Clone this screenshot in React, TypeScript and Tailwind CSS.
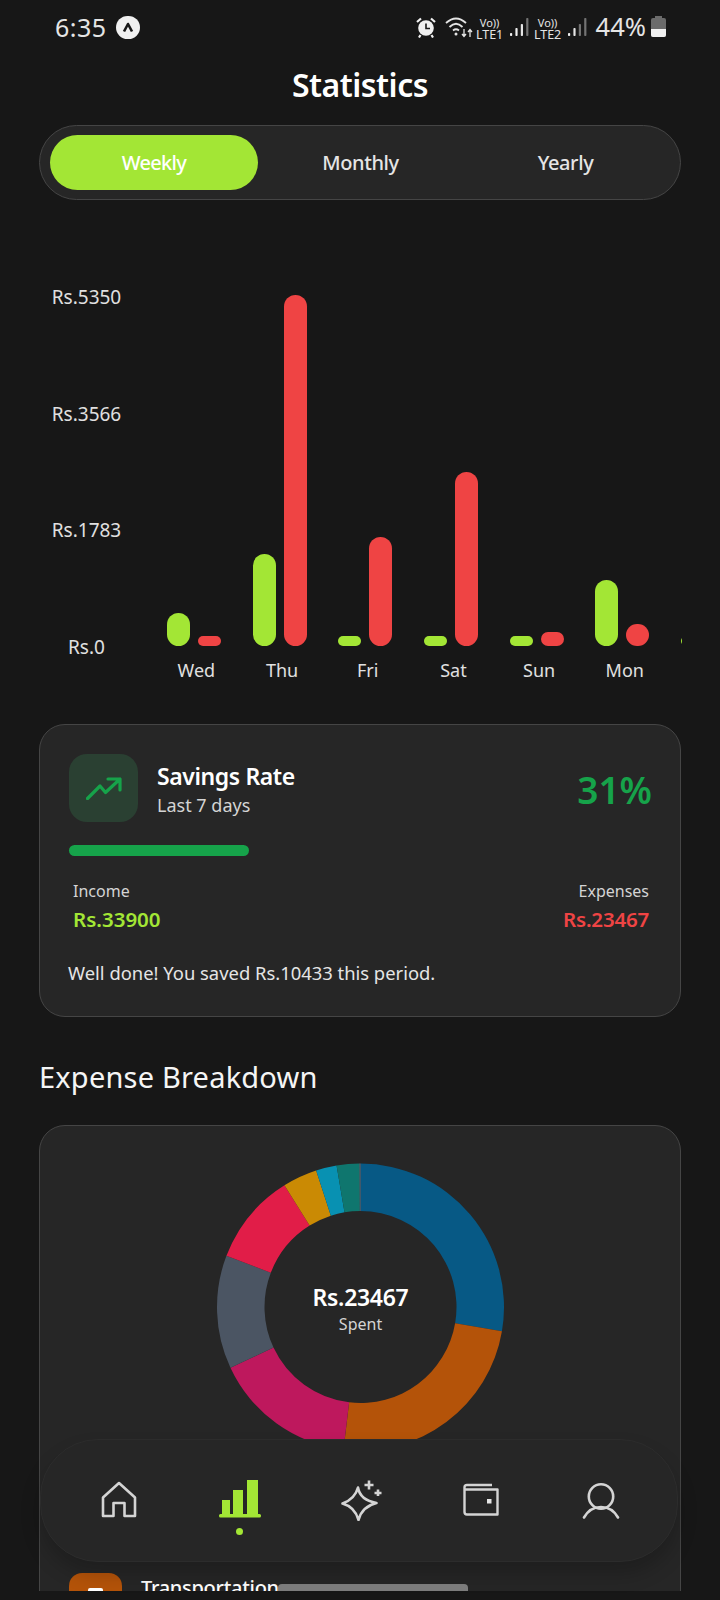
import type { ReactNode } from "react";

const days = [
  { name: "Wed", green: 33, red: 10 },
  { name: "Thu", green: 92, red: 351 },
  { name: "Fri", green: 10, red: 109 },
  { name: "Sat", green: 10, red: 174 },
  { name: "Sun", green: 10, red: 14 },
  { name: "Mon", green: 66, red: 22 },
  { name: "", green: 10, red: 10 },
];

const slices = [
  { from: 0, to: 99.7, color: "#075985" },
  { from: 99.7, to: 186.8, color: "#b45309" },
  { from: 186.8, to: 245, color: "#be185d" },
  { from: 245, to: 290.9, color: "#4b5563" },
  { from: 290.9, to: 328, color: "#e11d48" },
  { from: 328, to: 342, color: "#ca8a04" },
  { from: 342, to: 350.4, color: "#0891b2" },
  { from: 350.4, to: 359.6, color: "#0f766e" },
  { from: 359.6, to: 360, color: "#6b7280" },
];

function arcPath(from: number, to: number) {
  const cx = 144.5;
  const cy = 144;
  const R = 143.5;
  const r = 96;
  const pt = (rad: number, deg: number) => {
    const a = (deg * Math.PI) / 180;
    return `${(cx + rad * Math.sin(a)).toFixed(2)} ${(cy - rad * Math.cos(a)).toFixed(2)}`;
  };
  const large = to - from > 180 ? 1 : 0;
  return `M${pt(R, from)} A${R} ${R} 0 ${large} 1 ${pt(R, to)} L${pt(r, to)} A${r} ${r} 0 ${large} 0 ${pt(r, from)} Z`;
}

function Signal({ levels }: { levels: string[] }) {
  const heights = [3, 8, 12, 18];
  return (
    <svg width="19" height="20" viewBox="0 0 19 20" className="shrink-0">
      {heights.map((h, i) => (
        <rect key={i} x={i * 5.4} y={19 - h} width="2.2" height={h} rx="0.8" fill={levels[i]} />
      ))}
    </svg>
  );
}

function Lte({ label }: { label: string }) {
  return (
    <div className="flex w-[28px] shrink-0 flex-col items-center text-[12.5px] leading-[12px] text-[#e5e5e5]">
      <span className="text-[11px]">Vo))</span>
      <span>{label}</span>
    </div>
  );
}

function StatusBar() {
  return (
    <div className="flex h-[54px] items-center pl-[55px] text-[#e5e5e5]">
      <span className="text-[25px] leading-none tracking-[0.5px]">6:35</span>
      <div className="ml-[9px] flex h-[23px] w-[24px] items-center justify-center rounded-full bg-[#f0f0f0]">
        <svg width="12" height="11" viewBox="0 0 12 11">
          <path d="M2 9.5 L6 2 L10 9.5" fill="none" stroke="#171717" strokeWidth="2.6" strokeLinejoin="round" />
        </svg>
      </div>
      <svg width="20" height="21" viewBox="0 0 20 21" className="ml-[276px] shrink-0">
        <circle cx="10" cy="11" r="7.8" fill="#f0f0f0" />
        <path d="M10 6.5 V11.5 H14" fill="none" stroke="#171717" strokeWidth="1.6" />
        <path d="M1 5 L5 1.5 M19 5 L15 1.5 M4.5 18 L3 20.5 M15.5 18 L17 20.5" stroke="#f0f0f0" strokeWidth="2.2" />
      </svg>
      <svg width="28" height="22" viewBox="0 0 28 22" className="ml-[9px] shrink-0">
        <path d="M1 7 Q11 -2 21 7 M4.5 11 Q11 4.5 17.5 11 M8 14.5 Q11 12 14 14.5" fill="none" stroke="#e5e5e5" strokeWidth="1.8" />
        <circle cx="11" cy="18" r="1.5" fill="#e5e5e5" />
        <path d="M19 13 V20 M17 18 L19 20.5 L21 18 M25 21 V14 M23 16 L25 13.5 L27 16" fill="none" stroke="#e5e5e5" strokeWidth="1.3" />
      </svg>
      <div className="ml-[3px] mt-[3px]">
        <Lte label="LTE1" />
      </div>
      <div className="ml-[6px]">
        <Signal levels={["#f0f0f0", "#f0f0f0", "#e5e5e5", "#737373"]} />
      </div>
      <div className="ml-[5px] mt-[3px]">
        <Lte label="LTE2" />
      </div>
      <div className="ml-[6px]">
        <Signal levels={["#f0f0f0", "#e5e5e5", "#737373", "#737373"]} />
      </div>
      <span className="ml-[9px] text-[25.5px] leading-none">44%</span>
      <div className="ml-[5px] flex h-[19px] w-[15px] flex-col rounded-[2px] bg-[#6b6b6b]">
        <div className="mx-auto -mt-[2px] h-[2px] w-[7px] bg-[#6b6b6b]" />
        <div className="mt-auto h-[8px] rounded-b-[2px] bg-[#f0f0f0]" />
      </div>
    </div>
  );
}

function Tabs() {
  return (
    <div className="mx-[39px] mt-[9px] flex h-[75px] items-center rounded-full border border-[#454545] bg-[#262626] px-[10px] text-[20px] font-medium tracking-[-0.4px] text-[#e5e5e5]">
      <div className="flex h-[55px] w-[208px] items-center justify-center rounded-full bg-[#a3e635] tracking-[-0.7px] text-white">
        Weekly
      </div>
      <div className="flex w-[205px] items-center justify-center">Monthly</div>
      <div className="flex w-[205px] items-center justify-center">Yearly</div>
    </div>
  );
}

function Chart() {
  return (
    <div className="mt-[85px] flex pl-[40px]">
      <div className="flex h-[374px] w-[93px] shrink-0 flex-col justify-between text-center text-[19px] leading-[24px] text-[#e0e0e0]">
        <span>Rs.5350</span>
        <span>Rs.3566</span>
        <span>Rs.1783</span>
        <span>Rs.0</span>
      </div>
      <div className="ml-[18px] flex w-[531px] overflow-hidden">
        {days.map((d) => (
          <div key={d.green + d.name + d.red} className="w-[85.7px] shrink-0">
            <div className="flex h-[361px] items-end justify-center gap-[8px]">
              <div className="w-[23px] rounded-full bg-[#a3e635]" style={{ height: d.green }} />
              <div className="w-[23px] rounded-full bg-[#ef4444]" style={{ height: d.red }} />
            </div>
            <div className="mt-[12px] h-[24px] pl-[5px] text-center text-[18px] leading-[24px] text-[#e0e0e0]">{d.name}</div>
          </div>
        ))}
      </div>
    </div>
  );
}

function SavingsCard() {
  return (
    <div className="mx-[39px] mt-[42px] h-[293px] rounded-[26px] border border-[#454545] bg-[#262626] pl-[29px] pr-[28px] pt-[29px]">
      <div className="flex items-start">
        <div className="flex h-[68px] w-[69px] items-center justify-center rounded-[18px] bg-[#2a4032]">
          <svg width="36" height="23" viewBox="0 0 36 23">
            <path d="M1.5 21.5 L14 9 L19.5 15.5 L34 2 M22 2 H34 V13" fill="none" stroke="#16a34a" strokeWidth="3.2" strokeLinecap="round" strokeLinejoin="round" />
          </svg>
        </div>
        <div className="ml-[19px] pt-[5px]">
          <div className="text-[23px] font-semibold leading-[34px] tracking-[-0.4px] text-white">Savings Rate</div>
          <div className="mt-[-1px] text-[18px] leading-[26px] text-[#d4d4d4]">Last 7 days</div>
        </div>
        <div className="ml-auto pt-[11px] text-[37px] font-semibold leading-[50px] text-[#16a34a]">31%</div>
      </div>
      <div className="mt-[23px] h-[11px] w-[180px] rounded-full bg-[#16a34a]" />
      <div className="mt-[23px] flex justify-between pl-[4px] pr-[3px]">
        <div>
          <div className="text-[16px] leading-[24px] text-[#d4d4d4]">Income</div>
          <div className="mt-[2px] text-[20.5px] font-semibold leading-[28px] text-[#a3e635]">Rs.33900</div>
        </div>
        <div className="text-right">
          <div className="text-[16px] leading-[24px] text-[#d4d4d4]">Expenses</div>
          <div className="mt-[2px] text-[20.5px] font-semibold leading-[28px] tracking-[-0.2px] text-[#ef4444]">Rs.23467</div>
        </div>
      </div>
      <div className="-ml-[1px] mt-[27px] text-[18.4px] leading-[26px] text-[#e5e5e5]">Well done! You saved Rs.10433 this period.</div>
    </div>
  );
}

function BreakdownCard() {
  return (
    <div className="mx-[39px] mt-[28px] h-[600px] rounded-[26px] border border-[#454545] bg-[#262626] px-[29px] pt-[37px]">
      <div className="relative mx-auto h-[288px] w-[288px]">
        <svg width="288" height="288" viewBox="0 0 288 288">
          {slices.map((s) => (
            <path key={s.color} d={arcPath(s.from, s.to)} fill={s.color} />
          ))}
        </svg>
        <div className="absolute inset-0 flex flex-col items-center pl-[1px] pt-[118px]">
          <div className="text-[23px] font-semibold leading-[32px] tracking-[-0.3px] text-white">Rs.23467</div>
          <div className="text-[16px] leading-[22px] text-[#d4d4d4]">Spent</div>
        </div>
      </div>
      <div className="mt-[122px] flex">
        <div className="flex h-[52px] w-[53px] shrink-0 justify-center rounded-[13px] bg-[#b45309] pt-[15px]">
          <div className="h-[14px] w-[15px] rounded-[2px] bg-white" />
        </div>
        <div className="ml-[19px] pt-[1px] text-[20px] font-medium leading-[28px] tracking-[-0.3px] text-white">Transportation</div>
      </div>
    </div>
  );
}

function NavCell({ children }: { children: ReactNode }) {
  return <div className="flex w-[120.5px] shrink-0 flex-col items-center">{children}</div>;
}

function BottomNav() {
  return (
    <div className="absolute left-[40px] top-[1439px] flex h-[123px] w-[638px] rounded-[58px] border border-[#2c2c2c] bg-[#262626] pl-[18px] pt-[40px] shadow-[0_12px_20px_rgba(0,0,0,0.2)]">
      <NavCell>
        <svg width="36" height="37" viewBox="0 0 36 37" className="mt-[1px]">
          <path d="M2 16.5 L18 2 L34 16.5 V35 H23.5 V22 H12.5 V35 H2 Z" fill="none" stroke="#d4d4d4" strokeWidth="2.6" strokeLinejoin="round" />
        </svg>
      </NavCell>
      <NavCell>
        <svg width="42" height="38" viewBox="0 0 42 38">
          <rect x="3" y="20" width="8" height="15" fill="#a3e635" />
          <rect x="14" y="10" width="10" height="25" fill="#a3e635" />
          <rect x="28" y="0" width="11" height="35" fill="#a3e635" />
          <rect x="0" y="34" width="42" height="3.5" rx="1.5" fill="#a3e635" />
        </svg>
        <div className="mt-[10px] h-[7px] w-[7px] rounded-full bg-[#a3e635]" />
      </NavCell>
      <NavCell>
        <svg width="42" height="42" viewBox="0 0 42 42" className="-mt-[1px] ml-[3px]">
          <path d="M17 8.5 Q19 21 35.5 24 Q21 27.5 17.5 41 Q14 28 1.5 24.5 Q14 20 17 8.5 Z" fill="none" stroke="#d4d4d4" strokeWidth="2.6" strokeLinejoin="round" />
          <path d="M28 1.5 V10.5 M23.5 6 H32.5 M37 10.5 V17 M33.5 14 H40.5" fill="none" stroke="#d4d4d4" strokeWidth="2.6" />
        </svg>
      </NavCell>
      <NavCell>
        <svg width="36" height="33" viewBox="0 0 36 33" className="mt-[3px]">
          <path d="M29 2 H4 Q1.5 2 1.5 4.5 V29 Q1.5 31.5 4 31.5 H34.5 V6.5 H1.5" fill="none" stroke="#d4d4d4" strokeWidth="2.4" strokeLinejoin="round" />
          <rect x="24" y="16" width="4.5" height="4.5" fill="#e5e5e5" />
        </svg>
      </NavCell>
      <NavCell>
        <svg width="38" height="36" viewBox="0 0 38 36" className="mt-[3px]">
          <circle cx="19" cy="13.5" r="12.2" fill="none" stroke="#d4d4d4" strokeWidth="2.6" />
          <path d="M2 34.5 Q8 24 19 24 Q30 24 36 34.5" fill="none" stroke="#d4d4d4" strokeWidth="2.6" strokeLinecap="round" />
        </svg>
      </NavCell>
    </div>
  );
}

export default function App() {
  return (
    <div className="relative h-[1600px] w-[720px] overflow-hidden bg-[#171717] font-['Noto_Sans',sans-serif]">
      <div className="h-[1591px] overflow-hidden">
        <StatusBar />
        <h1 className="h-[62px] text-center text-[32px] font-semibold leading-[62px] tracking-[-0.5px] text-white">Statistics</h1>
        <Tabs />
        <Chart />
        <SavingsCard />
        <h2 className="mt-[40px] pl-[39px] text-[29px] font-normal leading-[40px] tracking-[0.2px] text-[#f5f5f5]">Expense Breakdown</h2>
        <BreakdownCard />
      </div>
      <BottomNav />
      <div className="absolute left-[278px] top-[1584px] h-[7px] w-[190px] rounded-t-[4px] bg-white/40" />
    </div>
  );
}
